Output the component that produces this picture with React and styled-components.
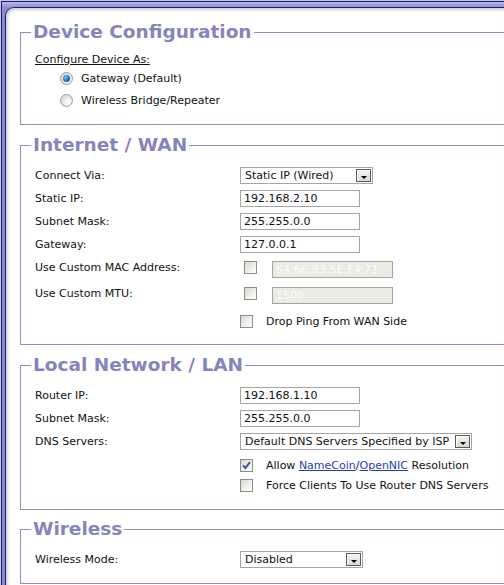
import styled, { createGlobalStyle } from 'styled-components'

//css
const Global = createGlobalStyle`
	html, body {
		margin: 0;
		padding: 0;
		background: #ffffff;
		overflow: hidden;
	}
	body {
		font-family: 'DejaVu Sans', Verdana, sans-serif;
		font-size: 11px;
		color: #111;
	}
`

const Frame = styled.div`
	height: 585px;
	border-top: 1px solid #c4c4ee;
	border-left: 1px solid #c4c4ee;
	box-sizing: border-box;
`

const Chrome = styled.div`
	height: 100%;
	box-sizing: border-box;
	border-top: 1px solid #20205e;
	border-left: 1px solid #20205e;
	padding: 5px 0 0 3px;
	background: linear-gradient(to bottom, #b8b8ee 0, #8a8ad6 6px, #8a8ad6 100%);
`

const Panel = styled.div`
	height: 100%;
	box-sizing: border-box;
	background: #fff;
	border-top: 1px solid #20205e;
	border-left: 1px solid #20205e;
	border-top-left-radius: 9px;
	box-shadow: inset 2px 2px 3px rgba(60, 60, 90, 0.25);
	padding: 13px 0 0 14px;
	overflow: hidden;
`

const Fieldset = styled.fieldset`
	margin: 0 -30px ${p => p.$mb || 8}px 0;
	border: 1px solid #8e8ec4;
	padding: ${p => p.$pt || 8}px 0 ${p => p.$pb || 14}px 14px;
	min-width: 0;
`

const Legend = styled.legend`
	font-size: 18.5px;
	line-height: 22px;
	font-weight: bold;
	color: #8585bd;
	padding: 0 2px;
	margin-left: -4px;
`

const Row = styled.div`
	display: flex;
	align-items: ${p => (p.$top ? 'flex-start' : 'center')};
	height: ${p => p.$h || 23}px;
	margin-top: ${p => p.$mt || 0}px;
`

const Label = styled.div`
	width: 205px;
	flex: none;
	line-height: 13px;
`

const Caption = styled.div`
	height: 15px;
	line-height: 15px;
	text-decoration: underline;
`

const RadioRow = styled.label`
	display: flex;
	align-items: center;
	height: 22px;
	padding-left: 25px;
	gap: 8px;
`

const Radio = styled.span`
	width: 13px;
	height: 13px;
	border-radius: 50%;
	box-sizing: border-box;
	border: 1px solid #9a9a9a;
	background: radial-gradient(circle at 65% 65%, #ffffff 0, #eaeaea 45%, #c8c8c8 100%);
	display: flex;
	align-items: center;
	justify-content: center;
	&::after {
		content: '';
		display: ${p => (p.$on ? 'block' : 'none')};
		width: 7px;
		height: 7px;
		border-radius: 50%;
		background: radial-gradient(circle at 35% 35%, #7cc4f4 0, #1b7ac2 50%, #0b4a82 100%);
	}
`

const Input = styled.div`
	width: ${p => p.$w || 120}px;
	height: 17px;
	box-sizing: border-box;
	border: 1px solid #a5a5a5;
	background: ${p => (p.$off ? '#ebebe4' : '#fff')};
	color: ${p => (p.$off ? '#fbfbf8' : '#111')};
	line-height: 15px;
	padding-left: 3px;
	margin-left: ${p => p.$ml || 0}px;
	flex: none;
`

const Select = styled.div`
	width: ${p => p.$w || 133}px;
	height: 17px;
	box-sizing: border-box;
	border: 1px solid #a5a5a5;
	background: #fff;
	display: flex;
	align-items: center;
	justify-content: space-between;
	padding: 0 1px 0 4px;
	line-height: 15px;
	flex: none;
`

const Arrow = styled.span`
	width: 15px;
	height: 13px;
	box-sizing: border-box;
	border: 1px solid #5a5a5a;
	background: linear-gradient(to bottom, #f4f4f2, #d8d8d4);
	box-shadow: inset 1px 1px 0 #fff;
	display: flex;
	align-items: flex-end;
	justify-content: center;
	padding-bottom: 2px;
	&::after {
		content: '';
		border-left: 3px solid transparent;
		border-right: 3px solid transparent;
		border-top: 3px solid #000;
	}
`

const Box = styled.span`
	width: 13px;
	height: 13px;
	box-sizing: border-box;
	border: 1px solid #8c8c8c;
	background: linear-gradient(135deg, #d6d6cf 0, #eeeee9 50%, #ffffff 100%);
	flex: none;
	margin-left: ${p => p.$ml || 0}px;
	display: flex;
	align-items: center;
	justify-content: center;
`

const CheckText = styled.span`
	margin-left: 13px;
	line-height: 13px;
`

const Link = styled.a`
	color: #1f3fb0;
	text-decoration: underline;
`

const Check = ({ on, ml }) => (
	<Box $ml={ml}>
		{on && (
			<svg width='9' height='9' viewBox='0 0 9 9'>
				<path d='M1 4.5 L3.4 7 L8 1.2' fill='none' stroke='#3a52a8' strokeWidth='2' />
			</svg>
		)}
	</Box>
)

const Dropdown = ({ w, children }) => (
	<Select $w={w}>
		<span>{children}</span>
		<Arrow />
	</Select>
)

const App = () => {
	return (
		<>
			<Global />
			<Frame>
				<Chrome>
					<Panel>
						{/* device */}
						<Fieldset $pt={9} $pb={13} $mb={9}>
							<Legend>Device Configuration</Legend>
							<Caption>Configure Device As:</Caption>
							<RadioRow>
								<Radio $on />
								<span>Gateway (Default)</span>
							</RadioRow>
							<RadioRow>
								<Radio />
								<span>Wireless Bridge/Repeater</span>
							</RadioRow>
						</Fieldset>

						{/* wan */}
						<Fieldset $pt={8} $pb={15} $mb={9}>
							<Legend>Internet / WAN</Legend>
							<Row>
								<Label>Connect Via:</Label>
								<Dropdown w={133}>Static IP (Wired)</Dropdown>
							</Row>
							<Row>
								<Label>Static IP:</Label>
								<Input>192.168.2.10</Input>
							</Row>
							<Row>
								<Label>Subnet Mask:</Label>
								<Input>255.255.0.0</Input>
							</Row>
							<Row>
								<Label>Gateway:</Label>
								<Input>127.0.0.1</Input>
							</Row>
							<Row $top $h={26} $mt={5}>
								<Label>Use Custom MAC Address:</Label>
								<Check ml={4} />
								<Input $off $w={121} $ml={15}>
									64:66:B3:5E:F4:71
								</Input>
							</Row>
							<Row $top $h={28}>
								<Label>Use Custom MTU:</Label>
								<Check ml={4} />
								<Input $off $w={121} $ml={15}>
									1500
								</Input>
							</Row>
							<Row $top $h={14}>
								<Label />
								<Check />
								<CheckText>Drop Ping From WAN Side</CheckText>
							</Row>
						</Fieldset>

						{/* lan */}
						<Fieldset $pt={8} $pb={14}>
							<Legend>Local Network / LAN</Legend>
							<Row>
								<Label>Router IP:</Label>
								<Input>192.168.1.10</Input>
							</Row>
							<Row>
								<Label>Subnet Mask:</Label>
								<Input>255.255.0.0</Input>
							</Row>
							<Row>
								<Label>DNS Servers:</Label>
								<Dropdown w={232}>Default DNS Servers Specified by ISP</Dropdown>
							</Row>
							<Row $h={20} $mt={2}>
								<Label />
								<Check on />
								<CheckText>
									Allow <Link href='#'>NameCoin</Link>/<Link href='#'>OpenNIC</Link> Resolution
								</CheckText>
							</Row>
							<Row $h={20}>
								<Label />
								<Check />
								<CheckText>Force Clients To Use Router DNS Servers</CheckText>
							</Row>
						</Fieldset>

						{/* wireless */}
						<Fieldset $pt={8} $pb={12}>
							<Legend>Wireless</Legend>
							<Row>
								<Label>Wireless Mode:</Label>
								<Dropdown w={123}>Disabled</Dropdown>
							</Row>
						</Fieldset>
					</Panel>
				</Chrome>
			</Frame>
		</>
	)
}

export default App
